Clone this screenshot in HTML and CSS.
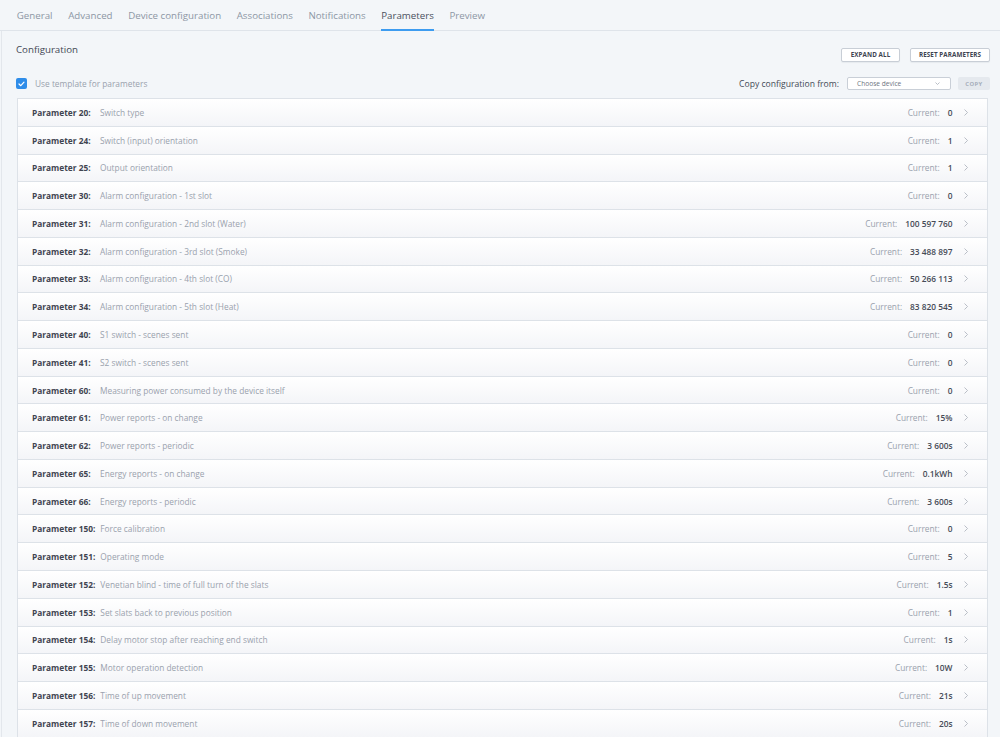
FILE: index.html
```html
<!DOCTYPE html>
<html lang="en">
<head>
<meta charset="utf-8">
<title>Parameters</title>
<link rel="stylesheet" href="styles.css">
</head>
<body>
<div class="page">
  <nav class="tabs">
    <span class="tab">General</span>
    <span class="tab">Advanced</span>
    <span class="tab">Device configuration</span>
    <span class="tab">Associations</span>
    <span class="tab">Notifications</span>
    <span class="tab active">Parameters</span>
    <span class="tab">Preview</span>
  </nav>
  <main class="content">
    <div class="header">
      <h1 class="title">Configuration</h1>
      <div class="actions">
        <button class="btn btn-expand">EXPAND ALL</button>
        <button class="btn btn-reset">RESET PARAMETERS</button>
      </div>
    </div>
    <div class="options">
      <label class="check">
        <span class="box"><svg width="7" height="6" viewBox="0 0 7 6"><polyline points="1,3 2.8,4.7 6,1.2" fill="none" stroke="#fff" stroke-width="1.2" stroke-linecap="round" stroke-linejoin="round"/></svg></span>
        <span class="check-label">Use template for parameters</span>
      </label>
      <div class="copy">
        <span class="copy-label">Copy configuration from:</span>
        <span class="select"><span>Choose device</span><svg width="5" height="3" viewBox="0 0 5 3"><polyline points="0.5,0.5 2.5,2.5 4.5,0.5" fill="none" stroke="#a8afb9" stroke-width="0.8"/></svg></span>
        <button class="btn-copy">COPY</button>
      </div>
    </div>
    <div class="list">
      <div class="row"><span class="pname">Parameter 20:</span><span class="pdesc">Switch type</span><span class="cur">Current:</span><span class="val">0</span><svg class="chev" width="4" height="7" viewBox="0 0 4 7"><polyline points="0.5,0.5 3.5,3.5 0.5,6.5" fill="none" stroke="#a8afb9" stroke-width="0.8"/></svg></div>
      <div class="row"><span class="pname">Parameter 24:</span><span class="pdesc">Switch (input) orientation</span><span class="cur">Current:</span><span class="val">1</span><svg class="chev" width="4" height="7" viewBox="0 0 4 7"><polyline points="0.5,0.5 3.5,3.5 0.5,6.5" fill="none" stroke="#a8afb9" stroke-width="0.8"/></svg></div>
      <div class="row"><span class="pname">Parameter 25:</span><span class="pdesc">Output orientation</span><span class="cur">Current:</span><span class="val">1</span><svg class="chev" width="4" height="7" viewBox="0 0 4 7"><polyline points="0.5,0.5 3.5,3.5 0.5,6.5" fill="none" stroke="#a8afb9" stroke-width="0.8"/></svg></div>
      <div class="row"><span class="pname">Parameter 30:</span><span class="pdesc">Alarm configuration - 1st slot</span><span class="cur">Current:</span><span class="val">0</span><svg class="chev" width="4" height="7" viewBox="0 0 4 7"><polyline points="0.5,0.5 3.5,3.5 0.5,6.5" fill="none" stroke="#a8afb9" stroke-width="0.8"/></svg></div>
      <div class="row"><span class="pname">Parameter 31:</span><span class="pdesc">Alarm configuration - 2nd slot (Water)</span><span class="cur">Current:</span><span class="val">100 597 760</span><svg class="chev" width="4" height="7" viewBox="0 0 4 7"><polyline points="0.5,0.5 3.5,3.5 0.5,6.5" fill="none" stroke="#a8afb9" stroke-width="0.8"/></svg></div>
      <div class="row"><span class="pname">Parameter 32:</span><span class="pdesc">Alarm configuration - 3rd slot (Smoke)</span><span class="cur">Current:</span><span class="val">33 488 897</span><svg class="chev" width="4" height="7" viewBox="0 0 4 7"><polyline points="0.5,0.5 3.5,3.5 0.5,6.5" fill="none" stroke="#a8afb9" stroke-width="0.8"/></svg></div>
      <div class="row"><span class="pname">Parameter 33:</span><span class="pdesc">Alarm configuration - 4th slot (CO)</span><span class="cur">Current:</span><span class="val">50 266 113</span><svg class="chev" width="4" height="7" viewBox="0 0 4 7"><polyline points="0.5,0.5 3.5,3.5 0.5,6.5" fill="none" stroke="#a8afb9" stroke-width="0.8"/></svg></div>
      <div class="row"><span class="pname">Parameter 34:</span><span class="pdesc">Alarm configuration - 5th slot (Heat)</span><span class="cur">Current:</span><span class="val">83 820 545</span><svg class="chev" width="4" height="7" viewBox="0 0 4 7"><polyline points="0.5,0.5 3.5,3.5 0.5,6.5" fill="none" stroke="#a8afb9" stroke-width="0.8"/></svg></div>
      <div class="row"><span class="pname">Parameter 40:</span><span class="pdesc">S1 switch - scenes sent</span><span class="cur">Current:</span><span class="val">0</span><svg class="chev" width="4" height="7" viewBox="0 0 4 7"><polyline points="0.5,0.5 3.5,3.5 0.5,6.5" fill="none" stroke="#a8afb9" stroke-width="0.8"/></svg></div>
      <div class="row"><span class="pname">Parameter 41:</span><span class="pdesc">S2 switch - scenes sent</span><span class="cur">Current:</span><span class="val">0</span><svg class="chev" width="4" height="7" viewBox="0 0 4 7"><polyline points="0.5,0.5 3.5,3.5 0.5,6.5" fill="none" stroke="#a8afb9" stroke-width="0.8"/></svg></div>
      <div class="row"><span class="pname">Parameter 60:</span><span class="pdesc">Measuring power consumed by the device itself</span><span class="cur">Current:</span><span class="val">0</span><svg class="chev" width="4" height="7" viewBox="0 0 4 7"><polyline points="0.5,0.5 3.5,3.5 0.5,6.5" fill="none" stroke="#a8afb9" stroke-width="0.8"/></svg></div>
      <div class="row"><span class="pname">Parameter 61:</span><span class="pdesc">Power reports - on change</span><span class="cur">Current:</span><span class="val">15%</span><svg class="chev" width="4" height="7" viewBox="0 0 4 7"><polyline points="0.5,0.5 3.5,3.5 0.5,6.5" fill="none" stroke="#a8afb9" stroke-width="0.8"/></svg></div>
      <div class="row"><span class="pname">Parameter 62:</span><span class="pdesc">Power reports - periodic</span><span class="cur">Current:</span><span class="val">3 600s</span><svg class="chev" width="4" height="7" viewBox="0 0 4 7"><polyline points="0.5,0.5 3.5,3.5 0.5,6.5" fill="none" stroke="#a8afb9" stroke-width="0.8"/></svg></div>
      <div class="row"><span class="pname">Parameter 65:</span><span class="pdesc">Energy reports - on change</span><span class="cur">Current:</span><span class="val">0.1kWh</span><svg class="chev" width="4" height="7" viewBox="0 0 4 7"><polyline points="0.5,0.5 3.5,3.5 0.5,6.5" fill="none" stroke="#a8afb9" stroke-width="0.8"/></svg></div>
      <div class="row"><span class="pname">Parameter 66:</span><span class="pdesc">Energy reports - periodic</span><span class="cur">Current:</span><span class="val">3 600s</span><svg class="chev" width="4" height="7" viewBox="0 0 4 7"><polyline points="0.5,0.5 3.5,3.5 0.5,6.5" fill="none" stroke="#a8afb9" stroke-width="0.8"/></svg></div>
      <div class="row"><span class="pname">Parameter 150:</span><span class="pdesc">Force calibration</span><span class="cur">Current:</span><span class="val">0</span><svg class="chev" width="4" height="7" viewBox="0 0 4 7"><polyline points="0.5,0.5 3.5,3.5 0.5,6.5" fill="none" stroke="#a8afb9" stroke-width="0.8"/></svg></div>
      <div class="row"><span class="pname">Parameter 151:</span><span class="pdesc">Operating mode</span><span class="cur">Current:</span><span class="val">5</span><svg class="chev" width="4" height="7" viewBox="0 0 4 7"><polyline points="0.5,0.5 3.5,3.5 0.5,6.5" fill="none" stroke="#a8afb9" stroke-width="0.8"/></svg></div>
      <div class="row"><span class="pname">Parameter 152:</span><span class="pdesc">Venetian blind - time of full turn of the slats</span><span class="cur">Current:</span><span class="val">1.5s</span><svg class="chev" width="4" height="7" viewBox="0 0 4 7"><polyline points="0.5,0.5 3.5,3.5 0.5,6.5" fill="none" stroke="#a8afb9" stroke-width="0.8"/></svg></div>
      <div class="row"><span class="pname">Parameter 153:</span><span class="pdesc">Set slats back to previous position</span><span class="cur">Current:</span><span class="val">1</span><svg class="chev" width="4" height="7" viewBox="0 0 4 7"><polyline points="0.5,0.5 3.5,3.5 0.5,6.5" fill="none" stroke="#a8afb9" stroke-width="0.8"/></svg></div>
      <div class="row"><span class="pname">Parameter 154:</span><span class="pdesc">Delay motor stop after reaching end switch</span><span class="cur">Current:</span><span class="val">1s</span><svg class="chev" width="4" height="7" viewBox="0 0 4 7"><polyline points="0.5,0.5 3.5,3.5 0.5,6.5" fill="none" stroke="#a8afb9" stroke-width="0.8"/></svg></div>
      <div class="row"><span class="pname">Parameter 155:</span><span class="pdesc">Motor operation detection</span><span class="cur">Current:</span><span class="val">10W</span><svg class="chev" width="4" height="7" viewBox="0 0 4 7"><polyline points="0.5,0.5 3.5,3.5 0.5,6.5" fill="none" stroke="#a8afb9" stroke-width="0.8"/></svg></div>
      <div class="row"><span class="pname">Parameter 156:</span><span class="pdesc">Time of up movement</span><span class="cur">Current:</span><span class="val">21s</span><svg class="chev" width="4" height="7" viewBox="0 0 4 7"><polyline points="0.5,0.5 3.5,3.5 0.5,6.5" fill="none" stroke="#a8afb9" stroke-width="0.8"/></svg></div>
      <div class="row"><span class="pname">Parameter 157:</span><span class="pdesc">Time of down movement</span><span class="cur">Current:</span><span class="val">20s</span><svg class="chev" width="4" height="7" viewBox="0 0 4 7"><polyline points="0.5,0.5 3.5,3.5 0.5,6.5" fill="none" stroke="#a8afb9" stroke-width="0.8"/></svg></div>
    </div>
  </main>
</div>
</body>
</html>
```
FILE: styles.css
```css
html, body {
  margin: 0;
  padding: 0;
  height: 737px;
  overflow: hidden;
  background: #f3f6f9;
  font-family: "Open Sans", "Liberation Sans", sans-serif;
  color: #3f4450;
}

.page {
  width: 1000px;
}

.tabs {
  display: flex;
  height: 31px;
  padding-left: 9px;
  border-bottom: 1px solid #dfe4ea;
  box-sizing: border-box;
}

.tab {
  position: relative;
  display: flex;
  align-items: center;
  padding: 0 7.8px;
  font-size: 9.72px;
  color: #8d96a5;
}

.tab.active {
  color: #4a505d;
}

.tab.active::after {
  content: "";
  position: absolute;
  left: 7.8px;
  right: 7.8px;
  bottom: -1px;
  height: 1.6px;
  background: #3d9cf0;
}

.content {
  margin-left: 1px;
  border-left: 1px solid #e3e7ec;
  padding: 0 10px 0 14px;
}

.header {
  display: flex;
  justify-content: space-between;
  align-items: flex-start;
  padding-top: 12px;
}

.title {
  margin: 0;
  font-size: 9.72px;
  font-weight: 400;
  line-height: 14px;
  color: #434854;
}

.actions {
  display: flex;
  gap: 10px;
  margin-top: 5px;
}

.btn {
  height: 14px;
  padding: 0;
  box-sizing: border-box;
  background: #fff;
  border: 1px solid #c8ced6;
  border-radius: 2px;
  box-shadow: 0 1px 1px rgba(40, 50, 70, 0.06);
  font-family: "Open Sans", "Liberation Sans", sans-serif;
  font-size: 6.25px;
  font-weight: 700;
  letter-spacing: 0.1px;
  color: #3d4350;
  line-height: 12px;
}

.btn-expand { width: 59px; }
.btn-reset { width: 80px; }

.options {
  display: flex;
  justify-content: space-between;
  align-items: center;
  margin-top: 15px;
  height: 13px;
}

.check {
  display: flex;
  align-items: center;
  gap: 8px;
}

.box {
  width: 11px;
  height: 11px;
  border-radius: 2px;
  background: #2f8de9;
  display: flex;
  align-items: center;
  justify-content: center;
}

.check-label {
  font-size: 8.33px;
  color: #99a1ad;
}

.copy {
  display: flex;
  align-items: center;
}

.copy-label {
  font-size: 8.6px;
  color: #444a56;
  margin-right: 8px;
}

.select {
  width: 104px;
  height: 13px;
  box-sizing: border-box;
  background: #fff;
  border: 1px solid #c9cfd7;
  border-radius: 2px;
  display: flex;
  align-items: center;
  justify-content: space-between;
  padding: 0 10px 0 9px;
  font-size: 6.6px;
  color: #6d7482;
}

.btn-copy {
  margin-left: 7px;
  width: 32px;
  height: 13px;
  padding: 0;
  border: 0;
  border-radius: 2px;
  background: #e5e9ee;
  font-family: "Open Sans", "Liberation Sans", sans-serif;
  font-size: 5.9px;
  font-weight: 700;
  letter-spacing: 0.4px;
  color: #a7afbb;
}

.list {
  margin: 8px 2px 0 1px;
  border: 1px solid #dde2e8;
  border-bottom: 0;
}

.row {
  display: flex;
  align-items: center;
  height: 27.78px;
  box-sizing: border-box;
  border-bottom: 1px solid #dde2e8;
  background: linear-gradient(#ffffff, #f4f5f8);
  padding: 0 19px 0 14px;
  font-size: 8.33px;
}

.pname {
  min-width: 63px;
  margin-right: 5px;
  font-weight: 700;
  color: #3f4450;
  white-space: nowrap;
}

.pdesc {
  flex: 1;
  color: #99a1ad;
  white-space: nowrap;
}

.cur {
  color: #99a1ad;
}

.val {
  margin-left: 8px;
  font-weight: 600;
  color: #464b57;
}

.chev {
  margin-left: 11.5px;
}
```
